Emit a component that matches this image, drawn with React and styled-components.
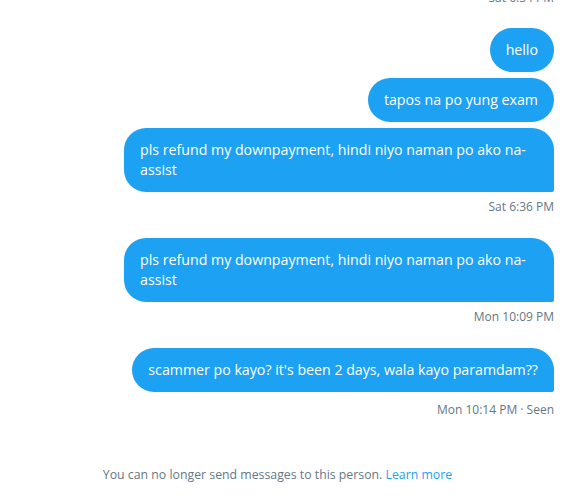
import React from "react";
import styled, { createGlobalStyle } from "styled-components";

const Global = createGlobalStyle`
  html, body { margin: 0; padding: 0; background: #ffffff; }
  body { font-family: "Open Sans", "Noto Sans", sans-serif; overflow: hidden; }
`;

const Page = styled.div`
  width: 564px;
  height: 496px;
  box-sizing: border-box;
  padding-right: 9px;
  overflow: hidden;
  display: flex;
  flex-direction: column;
`;

const Thread = styled.div`
  display: flex;
  flex-direction: column;
  align-items: flex-end;
  padding-right: 1px;
  margin-top: -11px;
`;

const Group = styled.div`
  display: flex;
  flex-direction: column;
  align-items: flex-end;
  gap: 6px;
  margin-bottom: ${(p) => p.$gap}px;
`;

const Bubble = styled.div`
  background: #1da1f2;
  color: #ffffff;
  font-size: 14.2px;
  line-height: 20px;
  padding: 12px 16px;
  max-width: 398px;
  border-radius: 22px;
  border-bottom-right-radius: ${(p) => (p.$last ? "2px" : "22px")};
  word-wrap: break-word;
`;

const Stamp = styled.div`
  color: #657786;
  font-size: 12px;
  line-height: 16px;
  margin-top: ${(p) => (p.$seen ? 4 : 1)}px;
  white-space: nowrap;
`;

const Footer = styled.div`
  text-align: center;
  color: #657786;
  font-size: 12.3px;
  line-height: 16px;
  margin-top: 27px;
`;

const Link = styled.a`
  color: #1da1f2;
  text-decoration: none;
`;

const groups = [
  { msgs: [], stamp: "Sat 6:34 PM", gap: 22 },
  {
    msgs: [
      "hello",
      "tapos na po yung exam",
      "pls refund my downpayment, hindi niyo naman po ako na-assist",
    ],
    stamp: "Sat 6:36 PM",
    gap: 23,
  },
  {
    msgs: ["pls refund my downpayment, hindi niyo naman po ako na-assist"],
    stamp: "Mon 10:09 PM",
    gap: 23,
  },
  {
    msgs: ["scammer po kayo? it's been 2 days, wala kayo paramdam??"],
    stamp: "Mon 10:14 PM · Seen",
    seen: true,
    gap: 22,
  },
];

export default function App() {
  return (
    <>
      <Global />
      <Page>
        <Thread>
          {groups.map((g, gi) => (
            <Group key={gi} $gap={g.gap}>
              {g.msgs.map((m, i) => (
                <Bubble key={i} $last={i === g.msgs.length - 1}>
                  {m}
                </Bubble>
              ))}
              <Stamp $seen={g.seen}>{g.stamp}</Stamp>
            </Group>
          ))}
        </Thread>
        <Footer>
          You can no longer send messages to this person. <Link href="#">Learn more</Link>
        </Footer>
      </Page>
    </>
  );
}
